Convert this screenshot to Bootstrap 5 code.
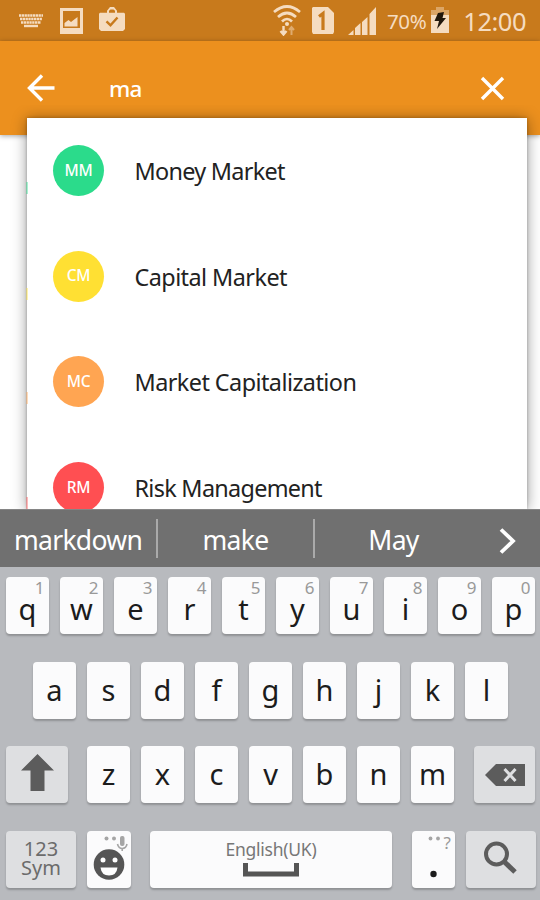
<!DOCTYPE html>
<html lang="en">
<head>
<meta charset="utf-8">
<meta name="viewport" content="width=device-width, initial-scale=1">
<title>Search</title>
<link href="https://cdn.jsdelivr.net/npm/bootstrap@5.3.0/dist/css/bootstrap.min.css" rel="stylesheet">
<style>
body{font-family:"Noto Sans",sans-serif;background:#fff}
.phone{width:540px;height:900px}
.phone svg{display:block;flex:none}
.status{height:41px;background:#c87a1c;color:#f5dcc0;padding:0 14px 0 19px}
.status .clock{font-size:25.5px;letter-spacing:-.5px;line-height:41px;margin:2px 0 0 14px}
.status .pct{font-size:20.5px;letter-spacing:-.4px;line-height:41px;margin:2px 0 0 11px}
.appbar{height:94px;background:#ec901e;padding:0 35px 0 27px;box-shadow:0 1px 5px rgba(0,0,0,.35)}
.query{font-size:22.5px;letter-spacing:-.8px;line-height:30px;margin:1px 0 0 54px;color:#fff;font-weight:500}
.results-area{height:374px;overflow:visible}
.results{width:500px;height:391px;margin:-17px 0 0 27px;box-shadow:0 1px 14px rgba(0,0,0,.4),0 0 3px rgba(0,0,0,.25);background:#fff;overflow:hidden;z-index:1}
.clipper{clip-path:inset(-30px 0 0 0)}
.result{height:105.7px;flex:none;padding-left:26px}
.avatar{width:51px;height:51px;color:#fff;font-size:15.5px;letter-spacing:-.3px;font-weight:500;margin-top:-1px}
.green{background:#2bdb8b}.yellow{background:#ffe033}.peach{background:#ffa552}.coral{background:#ff4f52}
.label{font-size:23.4px;letter-spacing:-.55px;color:#222;margin:0 0 0 30.500px;line-height:30px}
.tight{letter-spacing:-.7px}
.peek{width:2px;height:12px;left:26px;z-index:2;opacity:.4}
.suggest{height:58px;background:#707070;color:#fff;font-size:26.5px;letter-spacing:-.7px;border-top:1px solid #858585;z-index:3}
.suggest .word{line-height:57px;padding-top:3px;text-align:center}
.bar{width:2px;height:39px;background:#aaa}
.keys{height:333px;background:#b8babe;padding:10px 4px 0 6px;gap:27.5px;z-index:3}
.keyrow{height:57px;gap:11px}
.key{width:43px;height:57px;border-radius:4px;background:#fbfbfc;box-shadow:0 2px 2px rgba(0,0,0,.22);font-size:29px;line-height:55px;color:#1c1c1c;flex:none}
.fn{background:#dedfe1;color:#666}
.hint{font-size:17px;line-height:18px;top:2px;right:4.5px;color:#999}
.glyph{padding-top:4px}
.sym{font-size:20px;line-height:20px;color:#6b6b6b}
.sym span{margin-top:-1px}
.lang{font-size:17.5px;letter-spacing:-.25px;line-height:20px;color:#777}
</style>
<script src="https://cdn.jsdelivr.net/npm/bootstrap@5.3.0/dist/js/bootstrap.bundle.min.js"></script>
</head>
<body class="m-0">
<div class="phone d-flex flex-column overflow-hidden">
  <header class="status d-flex align-items-center flex-shrink-0">
    <svg width="24" height="14" viewBox="0 0 24 14" fill="none" stroke="#f5dcc0"><path d="M0 1.500h24M1 5h22M2 8.500h20" stroke-width="2.600" stroke-dasharray="2.300 .5"/><path d="M5 12h14" stroke-width="2.400"/></svg>
    <svg width="23" height="26" viewBox="0 0 23 26" style="margin-left:17px"><path fill="#f5dcc0" fill-rule="evenodd" d="M0 0h23v26H0zM3 3v17h17V3z"/><path fill="#f5dcc0" d="M4.500 18.500V15l4-3 2.500 2 6.500-5v9.500z"/></svg>
    <svg width="26" height="25" viewBox="0 0 26 26" preserveAspectRatio="none" style="margin:-3px 0 0 16px"><path fill="#f5dcc0" fill-rule="evenodd" d="M1 6h7V4l3-4h4l3 4v2h7l1 1v16l-2 2H2l-2-2V7zM10 6h6V4l-1.500-1.500h-3L10 4z"/><path d="M7.500 15l4 4 7-8" fill="none" stroke="#c87a1c" stroke-width="2.400"/></svg>
    <svg class="ms-auto" width="28" height="31" viewBox="0 0 28 31" fill="none" stroke="#f5dcc0"><path d="M1 7q13-11 26 0M5 12q9-8 18 0M9 16.500q5-5 10 0" stroke-width="2.700"/><circle cx="14" cy="19" r="2" fill="#f5dcc0" stroke="none"/><path d="M10.500 21v8M7.500 26l3 3.500 3-3.500" stroke-width="2.400"/><path d="M18.500 30v-8M16 25l2.500-3 2.500 3" stroke-width="2" opacity=".5"/></svg>
    <svg width="22" height="27" viewBox="0 0 22 27" style="margin-left:11px"><path fill="#f5dcc0" d="M1 0h15l6 6v19l-1 2H1l-1-2V1z"/><path d="M7 9.500L11 6.500V23" fill="none" stroke="#c87a1c" stroke-width="3.200"/></svg>
    <svg width="28" height="28" viewBox="0 0 28 28" fill="#f5dcc0" style="margin-left:14px"><path d="M0 28l5.500-5v5zM7 28v-7l5.500-5v12zM14 28V15l5.500-5v18zM21.500 28V7L28 0v28z"/></svg>
    <span class="pct">70%</span>
    <svg width="18" height="26" viewBox="0 0 18 26" style="margin:-2px 0 0 5px"><path fill="#f5dcc0" opacity=".45" d="M5 0h8v3h5v6H0V3h5z"/><path fill="#f5dcc0" d="M0 8h18v18H0z"/><path fill="#22180c" d="M7 6l6-1-1.500 6H15L6 22l2-8H3.500z"/></svg>
    <span class="clock">12:00</span>
  </header>

  <nav class="appbar d-flex align-items-center flex-shrink-0">
    <svg width="28" height="28" viewBox="0 0 28 28" fill="none" stroke="#fff" stroke-width="3.400"><path d="M27.500 14H3M15 1.500L2.500 14 15 26.500"/></svg>
    <span class="query">ma</span>
    <svg class="ms-auto" width="25" height="25" viewBox="0 0 25 25" stroke="#fff" stroke-width="3.400"><path d="M2 2l21 21M23 2L2 23"/></svg>
  </nav>

  <main class="results-area flex-shrink-0 clipper position-relative">
    <i class="peek green position-absolute" style="top:47px"></i>
    <i class="peek yellow position-absolute" style="top:153px"></i>
    <i class="peek peach position-absolute" style="top:257px"></i>
    <i class="peek coral position-absolute" style="top:362px"></i>
    <div class="results d-flex flex-column position-relative">
      <div class="result d-flex align-items-center"><span class="avatar green rounded-circle d-flex align-items-center justify-content-center">MM</span><span class="label tight">Money Market</span></div>
      <div class="result d-flex align-items-center"><span class="avatar yellow rounded-circle d-flex align-items-center justify-content-center">CM</span><span class="label">Capital Market</span></div>
      <div class="result d-flex align-items-center"><span class="avatar peach rounded-circle d-flex align-items-center justify-content-center">MC</span><span class="label">Market Capitalization</span></div>
      <div class="result d-flex align-items-center"><span class="avatar coral rounded-circle d-flex align-items-center justify-content-center">RM</span><span class="label tight">Risk Management</span></div>
    </div>
  </main>

  <div class="suggest d-flex align-items-center flex-shrink-0 position-relative">
    <span class="word" style="width:156px">markdown</span><span class="bar"></span>
    <span class="word" style="width:155px">make</span><span class="bar"></span>
    <span class="word" style="width:157px">May</span>
    <svg width="18" height="28" viewBox="0 0 18 28" fill="none" stroke="#fff" stroke-width="3.800" style="margin:4px 0 0 27px"><path d="M2 2.500L14 14 2 25.500"/></svg>
  </div>

  <section class="keys d-flex flex-column flex-shrink-0 position-relative">
    <div class="keyrow d-flex text-center">
      <div class="key position-relative"><span class="hint position-absolute">1</span><div class="glyph">q</div></div>
      <div class="key position-relative"><span class="hint position-absolute">2</span><div class="glyph">w</div></div>
      <div class="key position-relative"><span class="hint position-absolute">3</span><div class="glyph">e</div></div>
      <div class="key position-relative"><span class="hint position-absolute">4</span><div class="glyph">r</div></div>
      <div class="key position-relative"><span class="hint position-absolute">5</span><div class="glyph">t</div></div>
      <div class="key position-relative"><span class="hint position-absolute">6</span><div class="glyph">y</div></div>
      <div class="key position-relative"><span class="hint position-absolute">7</span><div class="glyph">u</div></div>
      <div class="key position-relative"><span class="hint position-absolute">8</span><div class="glyph">i</div></div>
      <div class="key position-relative"><span class="hint position-absolute">9</span><div class="glyph">o</div></div>
      <div class="key position-relative"><span class="hint position-absolute">0</span><div class="glyph">p</div></div>
    </div>
    <div class="keyrow d-flex text-center" style="padding-left:27px">
      <div class="key">a</div><div class="key">s</div><div class="key">d</div><div class="key">f</div><div class="key">g</div><div class="key">h</div><div class="key">j</div><div class="key">k</div><div class="key">l</div>
    </div>
    <div class="keyrow d-flex text-center">
      <div class="key fn d-flex justify-content-center" style="width:62px;margin-right:8px;padding-top:8px"><svg width="33" height="37" viewBox="0 0 33 37"><path fill="#5c5c5c" d="M16.500 0L33 16.500h-9.500V37H9.500V16.500H0z"/></svg></div>
      <div class="key">z</div><div class="key">x</div><div class="key">c</div><div class="key">v</div><div class="key">b</div><div class="key">n</div><div class="key">m</div>
      <div class="key fn d-flex align-items-center justify-content-center" style="width:61px;margin-left:9px"><svg width="40" height="22" viewBox="0 0 40 22"><path fill="#5c5c5c" d="M0 11L11 0h29v22H11z"/><path d="M19.500 5l11 12M30.500 5l-11 12" stroke="#dedfe1" stroke-width="3"/></svg></div>
    </div>
    <div class="keyrow d-flex text-center">
      <div class="key fn sym d-flex flex-column justify-content-center" style="width:70px"><span>123</span><span>Sym</span></div>
      <div class="key d-flex justify-content-center" style="width:44px"><svg width="44" height="57" viewBox="0 0 44 57"><g fill="#a5a5a5"><circle cx="19.500" cy="7.500" r="2"/><circle cx="27" cy="7.500" r="2"/><rect x="33" y="5" width="4.500" height="10" rx="2"/></g><path d="M30.500 13q1 4.500 4.800 4.500T40 13M35.200 17v3" fill="none" stroke="#a5a5a5" stroke-width="1.600"/><circle cx="22" cy="33.500" r="15.300" fill="#555"/><circle cx="16" cy="29" r="2.500" fill="#fff"/><circle cx="28" cy="29" r="2.500" fill="#fff"/><path d="M13.500 36.500h17q-1 8-8.500 8t-8.500-8z" fill="#fff"/></svg></div>
      <div class="key d-flex flex-column align-items-center" style="width:242px;margin-left:8px;padding-top:8px"><span class="lang">English(UK)</span><svg width="56" height="14" viewBox="0 0 56 14" fill="none" stroke="#555" stroke-width="5" style="margin-top:4px"><path d="M2.500 0v11h51V0"/></svg></div>
      <div class="key position-relative" style="margin-left:9px"><svg width="43" height="57" viewBox="0 0 43 57"><g fill="#a5a5a5"><circle cx="18.500" cy="7.500" r="1.900"/><circle cx="26" cy="7.500" r="1.900"/></g><circle cx="21.500" cy="43" r="3.200" fill="#1c1c1c"/></svg><span class="hint position-absolute" style="right:4px;top:3px">?</span></div>
      <div class="key fn" style="width:70px"><svg width="70" height="57" viewBox="0 0 70 57" fill="none" stroke="#5c5c5c"><circle cx="30.500" cy="23" r="10.500" stroke-width="4"/><path d="M38 30.500l11 10.500" stroke-width="5"/></svg></div>
    </div>
  </section>
</div>
</body>
</html>
